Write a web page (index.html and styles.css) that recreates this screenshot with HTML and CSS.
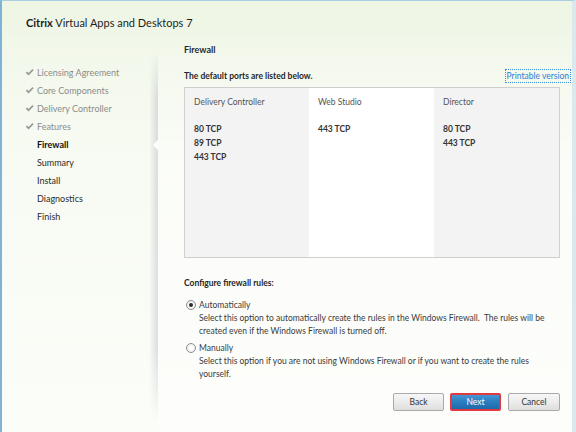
FILE: index.html
```html
<!DOCTYPE html>
<html lang="en">
<head>
    <meta charset="UTF-8">
    <title>Citrix Virtual Apps and Desktops 7 - Firewall</title>
    <link rel="stylesheet" href="styles.css">
</head>
<body>
    <div class="window">
        <div class="app-title"><b>Citrix</b> Virtual Apps and Desktops 7</div>

        <div class="wizard">
            <!-- step list on the left -->
            <ul class="steps">
                <li class="done"><span class="tick"><svg viewBox="0 0 10 10"><path d="M0.8 5.4 L2.4 3.9 L4 5.5 L8.2 1.2 L9.6 2.6 L4 8.3 Z"/></svg></span>Licensing Agreement</li>
                <li class="done"><span class="tick"><svg viewBox="0 0 10 10"><path d="M0.8 5.4 L2.4 3.9 L4 5.5 L8.2 1.2 L9.6 2.6 L4 8.3 Z"/></svg></span>Core Components</li>
                <li class="done"><span class="tick"><svg viewBox="0 0 10 10"><path d="M0.8 5.4 L2.4 3.9 L4 5.5 L8.2 1.2 L9.6 2.6 L4 8.3 Z"/></svg></span>Delivery Controller</li>
                <li class="done"><span class="tick"><svg viewBox="0 0 10 10"><path d="M0.8 5.4 L2.4 3.9 L4 5.5 L8.2 1.2 L9.6 2.6 L4 8.3 Z"/></svg></span>Features</li>
                <li class="current">Firewall<span class="notch"></span></li>
                <li>Summary</li>
                <li>Install</li>
                <li>Diagnostics</li>
                <li>Finish</li>
            </ul>

            <div class="content">
                <h2 class="page-title">Firewall</h2>

                <div class="ports-head">
                    <span class="ports-label">The default ports are listed below.</span>
                    <a class="print-link" href="#">Printable version</a>
                </div>

                <div class="ports-box">
                    <div class="port-col shaded">
                        <div class="col-name">Delivery Controller</div>
                        <div class="port">80 TCP</div>
                        <div class="port">89 TCP</div>
                        <div class="port">443 TCP</div>
                    </div>
                    <div class="port-col">
                        <div class="col-name">Web Studio</div>
                        <div class="port">443 TCP</div>
                    </div>
                    <div class="port-col shaded">
                        <div class="col-name">Director</div>
                        <div class="port">80 TCP</div>
                        <div class="port">443 TCP</div>
                    </div>
                </div>

                <div class="rules-label">Configure firewall rules:</div>

                <div class="option">
                    <div class="option-line"><span class="radio checked"></span>Automatically</div>
                    <p class="option-desc">Select this option to automatically create the rules in the Windows Firewall.&nbsp; The rules will be created even if the Windows Firewall is turned off.</p>
                </div>
                <div class="option">
                    <div class="option-line"><span class="radio"></span>Manually</div>
                    <p class="option-desc">Select this option if you are not using Windows Firewall or if you want to create the rules yourself.</p>
                </div>

                <div class="buttons">
                    <button class="btn">Back</button>
                    <button class="btn btn-next">Next</button>
                    <button class="btn">Cancel</button>
                </div>
            </div>
        </div>
    </div>
</body>
</html>
```

FILE: styles.css
```css
/* Base */
* {
  margin: 0;
  padding: 0;
  box-sizing: border-box;
}

body {
  font-family: "Segoe UI", Lato, "Open Sans", sans-serif;
  color: #262626;
  background: #ffffff;
}

.window {
  width: 576px;
  height: 432px;
  border-left: 2px solid #7fb3d6;
  border-top: 1px solid #a9cde3;
  border-right: 4px solid #dbe8ee;
  background: linear-gradient(180deg, #edf5e3 0%, #f3f8ec 14%, #f8fbf3 40%, #fbfdf8 100%);
  overflow: hidden;
}

.app-title {
  height: 41px;
  padding: 15px 0 0 24px;
  font-size: 11px;
  line-height: 14px;
  color: #1e1e1e;
}

.app-title b {
  font-weight: bold;
}

.wizard {
  display: flex;
  height: 390px;
}

/* Step list */
.steps {
  list-style: none;
  width: 156px;
  flex-shrink: 0;
  padding: 22px 0 0 23px;
  position: relative;
}

.steps::after {
  content: "";
  position: absolute;
  top: 10px;
  right: 0;
  width: 9px;
  height: 370px;
  background: linear-gradient(90deg, rgba(200, 205, 212, 0) 0%, rgba(190, 196, 204, 0.55) 100%);
  -webkit-mask-image: linear-gradient(180deg, transparent 0%, #000 12%, #000 80%, transparent 100%);
  mask-image: linear-gradient(180deg, transparent 0%, #000 12%, #000 80%, transparent 100%);
}

.steps li {
  height: 18px;
  line-height: 18px;
  font-size: 9px;
  color: #2b2b2b;
  padding-left: 12px;
  position: relative;
}

.steps li.done {
  color: #8c8c8c;
  padding-left: 0;
}

.steps li.current {
  font-weight: bold;
  color: #111;
}

.tick {
  display: inline-block;
  width: 9px;
  height: 9px;
  margin-right: 3px;
  vertical-align: -1px;
}

.tick svg {
  width: 9px;
  height: 9px;
  fill: #9a9a9a;
}

.notch {
  position: absolute;
  top: 4px;
  right: 0;
  width: 0;
  height: 0;
  border-top: 5px solid transparent;
  border-bottom: 5px solid transparent;
  border-right: 5px solid #ffffff;
  z-index: 2;
}

/* Content pane */
.content {
  flex: 1;
  padding: 0 0 0 26px;
  background: linear-gradient(180deg, rgba(255, 255, 255, 0) 0%, rgba(255, 255, 255, 0.5) 40%, rgba(255, 255, 255, 0.4) 100%);
}

.page-title {
  font-size: 9px;
  font-weight: bold;
  line-height: 16px;
  color: #2a2a2a;
}

.ports-head {
  display: flex;
  justify-content: space-between;
  align-items: center;
  margin-top: 10px;
  height: 16px;
}

.ports-label {
  font-size: 8.5px;
  font-weight: bold;
  color: #262626;
}

.print-link {
  font-size: 8.5px;
  color: #2b7fd6;
  text-decoration: none;
  border: 1px dotted #3a8ee0;
  padding: 0 1px;
  line-height: 12px;
  margin-right: 1px;
}

.ports-box {
  display: flex;
  width: 376px;
  height: 171px;
  margin-top: 3px;
  border: 1px solid #cfcfcf;
  background: #ffffff;
}

.port-col {
  width: 125px;
  padding: 8px 0 0 9px;
  font-size: 8.5px;
}

.port-col:first-child {
  width: 124px;
}

.port-col.shaded {
  background: #f3f3f3;
}

.col-name {
  line-height: 13px;
  color: #555;
  margin-bottom: 13px;
}

.port {
  line-height: 14px;
  font-weight: bold;
  color: #333;
}

.rules-label {
  margin-top: 18px;
  font-size: 8.5px;
  font-weight: bold;
  line-height: 14px;
  color: #262626;
}

.option {
  margin-top: 8px;
  font-size: 8.5px;
  color: #333;
}

.option + .option {
  margin-top: 3px;
}

.option-line {
  display: flex;
  align-items: center;
  line-height: 14px;
  color: #3a3a3a;
}

.radio {
  width: 10px;
  height: 10px;
  border-radius: 50%;
  border: 1px solid #8e8e8e;
  background: radial-gradient(circle, #ffffff 30%, #e4e4e4 100%);
  margin: 0 3px 0 2px;
  position: relative;
}

.radio.checked::after {
  content: "";
  position: absolute;
  top: 2px;
  left: 2px;
  width: 4px;
  height: 4px;
  border-radius: 50%;
  background: #2c2c2c;
}

.option-desc {
  padding-left: 15px;
  line-height: 13px;
  color: #3a3a3a;
  width: 376px;
}

.buttons {
  display: flex;
  justify-content: flex-end;
  gap: 6px;
  width: 376px;
  margin-top: 12px;
}

.btn {
  width: 51px;
  height: 18px;
  font-family: inherit;
  font-size: 8.5px;
  color: #333;
  border: 1px solid #a9a9a9;
  border-radius: 2px;
  background: linear-gradient(180deg, #f7f7f7 0%, #ececec 50%, #dedede 100%);
}

.btn-next {
  color: #ffffff;
  border: 2px solid #e2383f;
  background: linear-gradient(180deg, #4596d4 0%, #2a7cc0 50%, #1d6aaa 100%);
}

.buttons .btn:last-child {
  width: 52px;
  margin-left: 1px;
}
```
